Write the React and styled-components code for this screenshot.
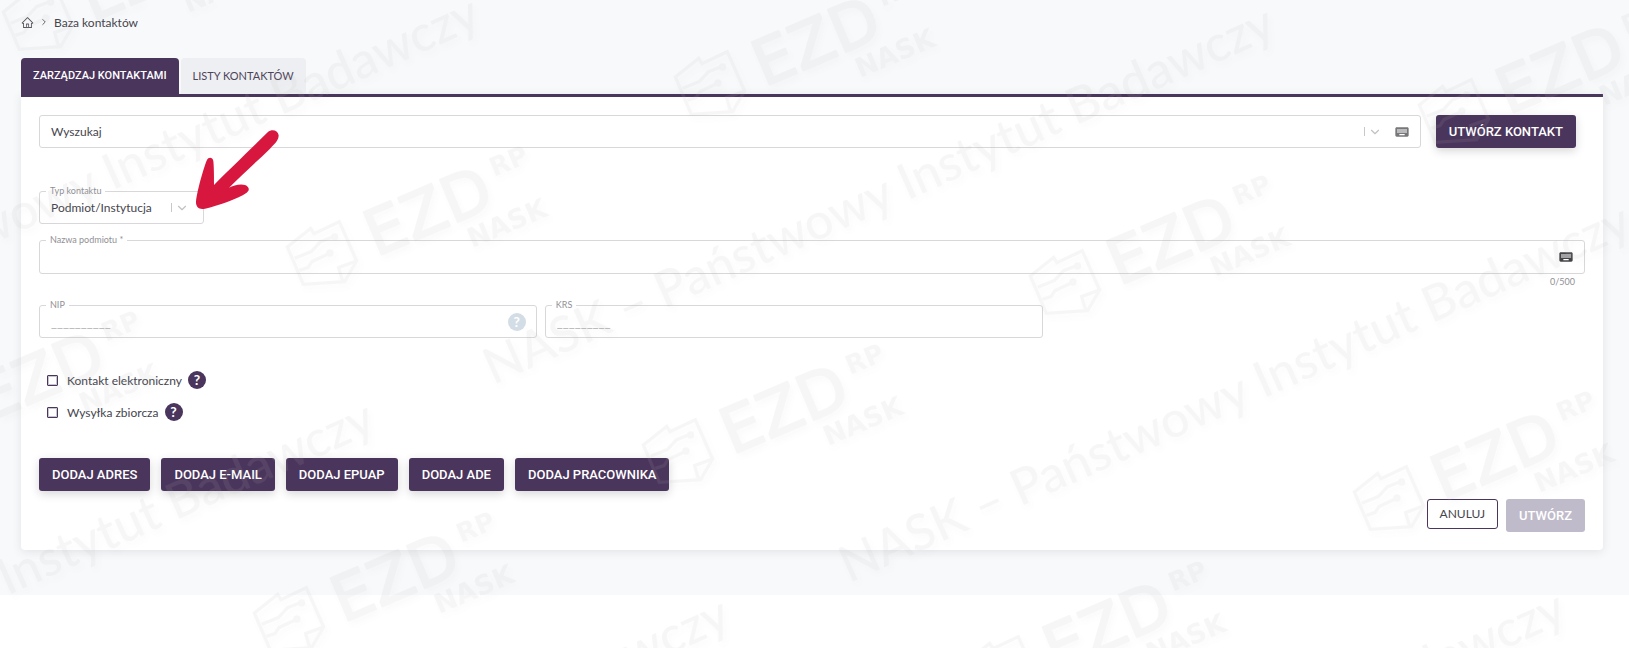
import styled, { createGlobalStyle } from "styled-components";
import { AiOutlineHome } from "react-icons/ai";
import { FiChevronDown, FiChevronRight } from "react-icons/fi";
import { MdKeyboard } from "react-icons/md";

const GlobalStyle = createGlobalStyle`
    :root {
        --color-principal: #4a355c;
        --color-texto: #45454d;
        --color-borde: #d8d8da;
        --color-fondo: #f8f9fb;
    }
    * {
        box-sizing: border-box;
    }
    body {
        margin: 0;
        background: #fff;
        color: var(--color-texto);
        font-family: Lato, "Open Sans", sans-serif;
        font-size: 12px;
    }
    button, input, select {
        font: inherit;
        color: inherit;
    }
`;

const Page = styled.div`
    position: relative;
    min-height: 100vh;
    overflow: hidden;
`;

const Main = styled.main`
    padding: 12px 26px 45px 21px;
    background: var(--color-fondo);
`;

const Breadcrumbs = styled.nav`
    display: flex;
    align-items: center;
    gap: 5px;
    height: 20px;
    margin-bottom: 26px;
    a {
        display: flex;
        color: #55555c;
    }
`;

const Tabs = styled.div`
    display: flex;
    gap: 2px;
    height: 36px;
`;

const Tab = styled.button`
    padding: 0 12px 2px;
    border: 0;
    border-radius: 4px 4px 0 0;
    cursor: pointer;
    font-family: ${({ $active }) => ($active ? "Roboto, sans-serif" : "inherit")};
    font-size: 11px;
    font-weight: ${({ $active }) => ($active ? 500 : 400)};
    color: ${({ $active }) => ($active ? "#fff" : "#4d4459")};
    background: ${({ $active }) => ($active ? "var(--color-principal)" : "#eeeff2")};
`;

const Panel = styled.section`
    padding: 18px;
    border-top: 3px solid var(--color-principal);
    border-radius: 0 0 4px 4px;
    background: #fff;
    box-shadow: 0 2px 10px rgba(60, 75, 85, 0.12);
`;

const SearchRow = styled.div`
    display: flex;
    gap: 15px;
    margin: 0 9px 43px 0;
`;

const Field = styled.div`
    position: relative;
    display: flex;
    align-items: center;
    gap: 8px;
    flex: ${({ $grow }) => ($grow ? 1 : "none")};
    width: ${({ $width }) => $width || "auto"};
    height: ${({ $tall }) => ($tall ? 34 : 33)}px;
    padding-right: 10px;
    border: 1px solid var(--color-borde);
    border-radius: 3px;
`;

const FieldLabel = styled.label`
    position: absolute;
    top: -7px;
    left: 6px;
    padding: 0 4px;
    font-size: 9px;
    line-height: 12px;
    color: #909096;
    background: #fff;
`;

const TextInput = styled.input`
    flex: 1;
    min-width: 0;
    height: 100%;
    padding: 0 0 0 11px;
    border: 0;
    outline: 0;
    background: transparent;
    &::placeholder {
        color: var(--color-texto);
        opacity: 1;
    }
`;

const MaskInput = styled(TextInput)`
    font-size: 13px;
    &::placeholder {
        color: #b4b4b8;
    }
`;

const Select = styled.select`
    flex: 1;
    min-width: 0;
    height: 100%;
    padding: 0 0 0 11px;
    border: 0;
    outline: 0;
    appearance: none;
    background: transparent;
`;

const IconButton = styled.button`
    display: flex;
    align-items: center;
    padding: 0;
    border: 0;
    cursor: pointer;
    color: ${({ $color }) => $color || "#444448"};
    background: transparent;
`;

const Toggle = styled(IconButton)`
    height: 9px;
    padding-left: 3px;
    margin-right: 4px;
    border-left: 1px solid #c8c8ca;
    color: #c2c2c4;
`;

const SelectMark = styled.span`
    display: flex;
    align-items: center;
    height: 9px;
    padding-left: 3px;
    margin-right: 4px;
    border-left: 1px solid #c8c8ca;
    pointer-events: none;
    color: #c2c2c4;
`;

const Button = styled.button`
    height: 33px;
    padding: 0 13px 1px;
    border: 0;
    border-radius: 3px;
    cursor: pointer;
    font-family: Roboto, sans-serif;
    font-size: 13px;
    font-weight: 500;
    white-space: nowrap;
    color: #fff;
    background: var(--color-principal);
    box-shadow: 0 3px 10px rgba(0, 0, 0, 0.16);
    &:disabled {
        cursor: default;
        background: #c0bbca;
        box-shadow: none;
    }
`;

const OutlineButton = styled.button`
    height: 30px;
    padding: 0 12px 2px;
    border: 1px solid var(--color-principal);
    border-radius: 3px;
    cursor: pointer;
    background: #fff;
`;

const Counter = styled.div`
    height: 12px;
    margin: 2px 10px 17px 0;
    font-size: 9px;
    line-height: 12px;
    text-align: right;
    color: #909096;
`;

const FieldRow = styled.div`
    display: flex;
    gap: 8px;
`;

const Checks = styled.div`
    display: flex;
    flex-direction: column;
    gap: 14px;
    margin: 33px 0 37px 8px;
`;

const CheckRow = styled.div`
    display: flex;
    align-items: center;
    gap: 6px;
    height: 18px;
    label {
        display: flex;
        align-items: center;
        gap: 9px;
    }
    input {
        width: 11px;
        height: 11px;
        margin: 0;
        border: 1px solid var(--color-principal);
        border-radius: 1px;
        appearance: none;
        background: #fff;
        box-shadow: inset 0 0 0 1px #c9c2cf;
    }
    input:checked {
        background: var(--color-principal);
    }
`;

const Help = styled.button`
    flex: none;
    width: 18px;
    height: 18px;
    padding: 0;
    border: 0;
    border-radius: 50%;
    cursor: pointer;
    font-size: 14px;
    font-weight: 700;
    line-height: 18px;
    color: #fff;
    background: ${({ $light }) => ($light ? "#d3dde5" : "var(--color-principal)")};
`;

const AddRow = styled.div`
    display: flex;
    gap: 11px;
    margin-bottom: 8px;
`;

const Footer = styled.div`
    display: flex;
    justify-content: flex-end;
    align-items: flex-start;
    gap: 8px;
`;

const TypeRow = styled.div`
    position: relative;
    margin-bottom: 16px;
`;

const Arrow = styled.svg`
    position: absolute;
    top: -71px;
    left: 151px;
    width: 100px;
    height: 100px;
    fill: #d8173f;
    pointer-events: none;
`;

const WatermarkLayer = styled.svg`
    position: absolute;
    top: 0;
    left: 0;
    width: 100%;
    height: 100%;
    pointer-events: none;
    opacity: 0.11;
    fill: #b4b4b4;
    filter: drop-shadow(3px 4px 3px rgba(120, 120, 120, 0.3));
    .slogan {
        font-family: Lato, sans-serif;
        font-size: 50px;
        font-weight: 500;
    }
    .name {
        font-family: "DejaVu Sans", sans-serif;
        stroke: #b4b4b4;
        stroke-width: 2;
        stroke-linejoin: round;
    }
    .small {
        font-family: "DejaVu Sans", sans-serif;
        font-weight: 700;
    }
    .sign {
        fill: none;
        stroke: #b4b4b4;
        stroke-width: 10;
    }
`;

const logos = [
    [2, 12], [674, 77], [1418, 105],
    [286, 247], [1029, 276], [-102, 412],
    [642, 445], [1353, 492], [253, 613], [965, 662],
];

const slogans = [
    [-302, 375], [493, 385], [-407, 780], [849, 583], [-52, 976], [784, 970],
];

const addButtons = ["DODAJ ADRES", "DODAJ E-MAIL", "DODAJ EPUAP", "DODAJ ADE", "DODAJ PRACOWNIKA"];

function Watermark() {
    return (
        <WatermarkLayer aria-hidden="true">
            {slogans.map(([x, y]) => (
                <text key={`${x}-${y}`} className="slogan" transform={`translate(${x} ${y}) rotate(-24)`}>
                    NASK – Państwowy Instytut Badawczy
                </text>
            ))}
            {logos.map(([x, y]) => (
                <g key={`${x}-${y}`} transform={`translate(${x} ${y})`}>
                    <g className="sign" transform="scale(.333)">
                        <path d="M4 0 74-56 84-40 160-76 212 42 176 104 52 112Z" />
                        <path d="M212 42 158 62 168 96 176 104M26 34 76 14 104-16 140-30M40 70 66 62 78 44 128 20" />
                        <circle cx="146" cy="-30" r="6" />
                        <circle cx="132" cy="18" r="6" />
                    </g>
                    <text className="name" fontSize="63" transform="translate(90 10) rotate(-23)">EZD</text>
                    <text className="small" fontSize="26" transform="translate(208 -70) rotate(-23)">RP</text>
                    <text className="small" fontSize="27" transform="translate(186 1) rotate(-23)">NASK</text>
                </g>
            ))}
        </WatermarkLayer>
    );
}

function App() {
    return (
        <>
        <GlobalStyle />
        <Page>
            <Main>
                <Breadcrumbs aria-label="Okruszki">
                    <a href="#start" aria-label="Strona główna"><AiOutlineHome size={13} /></a>
                    <FiChevronRight size={10} />
                    <span>Baza kontaktów</span>
                </Breadcrumbs>
                <Tabs>
                    <Tab $active>ZARZĄDZAJ KONTAKTAMI</Tab>
                    <Tab>LISTY KONTAKTÓW</Tab>
                </Tabs>
                <Panel>
                    <SearchRow>
                        <Field $grow>
                            <TextInput aria-label="Wyszukaj" placeholder="Wyszukaj" />
                            <Toggle aria-label="Rozwiń"><FiChevronDown size={14} /></Toggle>
                            <IconButton $color="#77777a" aria-label="Klawiatura"><MdKeyboard size={16} /></IconButton>
                        </Field>
                        <Button>UTWÓRZ KONTAKT</Button>
                    </SearchRow>

                    <TypeRow>
                        <Field $width="165px">
                            <FieldLabel htmlFor="typ">Typ kontaktu</FieldLabel>
                            <Select id="typ">
                                <option>Podmiot/Instytucja</option>
                            </Select>
                            <SelectMark><FiChevronDown size={14} /></SelectMark>
                        </Field>
                        <Arrow viewBox="0 0 300 300">
                            <path d="M18 245C22 208 44 134 51 120 55 111 68 111 70 123 72 142 72 170 72 195 112 155 190 80 233 37 246 26 263 31 266 46 266 61 255 71 240 86 200 125 160 160 117 203 130 197 150 190 165 195 178 200 180 212 170 218 142 238 84 256 45 266 28 270 17 262 18 245Z" />
                        </Arrow>
                    </TypeRow>

                    <Field $tall>
                        <FieldLabel htmlFor="nazwa">Nazwa podmiotu *</FieldLabel>
                        <TextInput id="nazwa" />
                        <IconButton aria-label="Klawiatura"><MdKeyboard size={16} /></IconButton>
                    </Field>
                    <Counter>0/500</Counter>

                    <FieldRow>
                        <Field $width="32.2%">
                            <FieldLabel htmlFor="nip">NIP</FieldLabel>
                            <MaskInput id="nip" placeholder="__________" />
                            <Help $light aria-label="Pomoc">?</Help>
                        </Field>
                        <Field $width="32.2%">
                            <FieldLabel htmlFor="krs">KRS</FieldLabel>
                            <MaskInput id="krs" placeholder="_________" />
                        </Field>
                    </FieldRow>

                    <Checks>
                        <CheckRow>
                            <label><input type="checkbox" />Kontakt elektroniczny</label>
                            <Help aria-label="Pomoc">?</Help>
                        </CheckRow>
                        <CheckRow>
                            <label><input type="checkbox" />Wysyłka zbiorcza</label>
                            <Help aria-label="Pomoc">?</Help>
                        </CheckRow>
                    </Checks>

                    <AddRow>
                        {addButtons.map((text) => <Button key={text}>{text}</Button>)}
                    </AddRow>
                    <Footer>
                        <OutlineButton>ANULUJ</OutlineButton>
                        <Button disabled>UTWÓRZ</Button>
                    </Footer>
                </Panel>
            </Main>
            <Watermark />
        </Page>
        </>
    );
}

export default App;
